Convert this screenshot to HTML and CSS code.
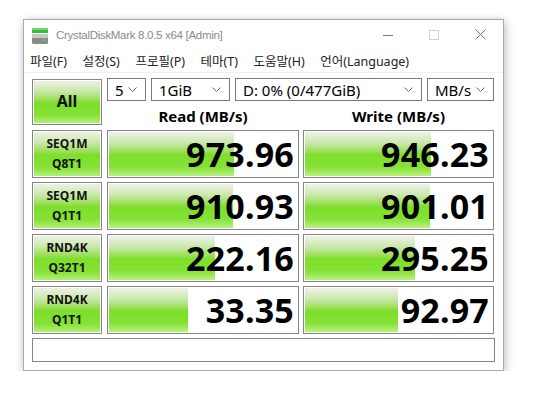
FILE: index.html
```html
<!DOCTYPE html>
<html lang="ko">
<head>
    <meta charset="UTF-8">
    <meta name="viewport" content="width=device-width, initial-scale=1.0">
    <title>CrystalDiskMark 8.0.5 x64 [Admin]</title>
    <link rel="stylesheet" href="styles.css">
</head>
<body>
    <div class="window">
        <div class="titlebar">
            <svg class="app-icon" width="18" height="18" viewBox="0 0 18 18">
                <rect x="1" y="1" width="16" height="5" fill="#3cb83c"/>
                <rect x="1" y="1" width="16" height="2" fill="#6ad86a"/>
                <rect x="1" y="7" width="16" height="10" rx="1.5" fill="#8a8a8a"/>
                <rect x="1" y="7" width="16" height="4" rx="1.5" fill="#c8c8c8"/>
                <rect x="12" y="12" width="3" height="2" fill="#4ed24e"/>
            </svg>
            <span class="title">CrystalDiskMark 8.0.5 x64 [Admin]</span>
            <div class="controls">
                <div class="ctl">
                    <svg width="10" height="10" viewBox="0 0 10 10"><path d="M0 5.5h10" stroke="#777" stroke-width="1"/></svg>
                </div>
                <div class="ctl">
                    <svg width="10" height="10" viewBox="0 0 10 10"><rect x="0.5" y="0.5" width="9" height="9" fill="none" stroke="#d0d0d0"/></svg>
                </div>
                <div class="ctl">
                    <svg width="11" height="11" viewBox="0 0 11 11"><path d="M0.5 0.5l10 10M10.5 0.5l-10 10" stroke="#777" stroke-width="1"/></svg>
                </div>
            </div>
        </div>
        <div class="menubar">
            <span class="menu-item">파일(F)</span>
            <span class="menu-item">설정(S)</span>
            <span class="menu-item">프로필(P)</span>
            <span class="menu-item">테마(T)</span>
            <span class="menu-item">도움말(H)</span>
            <span class="menu-item">언어(Language)</span>
        </div>
        <div class="client">
            <div class="top">
                <div class="btn all">All</div>
                <div class="top-right">
                    <div class="combos">
                        <div class="combo c-count"><span>5</span><svg class="chev" width="9" height="5" viewBox="0 0 9 5"><path d="M0.5 0.5l4 4 4-4" fill="none" stroke="#666"/></svg></div>
                        <div class="combo c-size"><span>1GiB</span><svg class="chev" width="9" height="5" viewBox="0 0 9 5"><path d="M0.5 0.5l4 4 4-4" fill="none" stroke="#666"/></svg></div>
                        <div class="combo c-drive"><span>D: 0% (0/477GiB)</span><svg class="chev" width="9" height="5" viewBox="0 0 9 5"><path d="M0.5 0.5l4 4 4-4" fill="none" stroke="#666"/></svg></div>
                        <div class="combo c-unit"><span>MB/s</span><svg class="chev" width="9" height="5" viewBox="0 0 9 5"><path d="M0.5 0.5l4 4 4-4" fill="none" stroke="#666"/></svg></div>
                    </div>
                    <div class="heads">
                        <div class="head read">Read (MB/s)</div>
                        <div class="head write">Write (MB/s)</div>
                    </div>
                </div>
            </div>

            <div class="row">
                <div class="btn label">SEQ1M<br>Q8T1</div>
                <div class="cell read"><div class="bar" style="--w: 125px">973.96</div></div>
                <div class="cell write"><div class="bar" style="--w: 126px">946.23</div></div>
            </div>
            <div class="row">
                <div class="btn label">SEQ1M<br>Q1T1</div>
                <div class="cell read"><div class="bar" style="--w: 124px">910.93</div></div>
                <div class="cell write"><div class="bar" style="--w: 125px">901.01</div></div>
            </div>
            <div class="row">
                <div class="btn label">RND4K<br>Q32T1</div>
                <div class="cell read"><div class="bar" style="--w: 106px">222.16</div></div>
                <div class="cell write"><div class="bar" style="--w: 110px">295.25</div></div>
            </div>
            <div class="row">
                <div class="btn label">RND4K<br>Q1T1</div>
                <div class="cell read"><div class="bar" style="--w: 79px">33.35</div></div>
                <div class="cell write"><div class="bar" style="--w: 93px">92.97</div></div>
            </div>

            <div class="status"></div>
        </div>
    </div>
</body>
</html>
```

FILE: styles.css
```css
body {
    margin: 0;
    background: #fff;
    font-family: "Noto Sans", "Noto Sans CJK KR", sans-serif;
    color: #000;
}
.window {
    margin: 19px 0 0 23px;
    width: 479px;
    height: 350px;
    border: 1px solid #aaa;
    background: #fff;
    box-shadow: 1px 2px 9px rgba(0, 0, 0, 0.28);
    display: flex;
    flex-direction: column;
}
.titlebar {
    height: 29px;
    display: flex;
    align-items: center;
}
.app-icon {
    margin-left: 7px;
    margin-top: 2px;
}
.title {
    margin-left: 7px;
    font-family: "Liberation Sans", "Noto Sans", sans-serif;
    font-size: 11.5px;
    letter-spacing: -0.3px;
    color: #8a8a8a;
}
.controls {
    margin-left: auto;
    display: flex;
    height: 100%;
}
.ctl {
    width: 46px;
    display: flex;
    align-items: center;
    justify-content: center;
}
.menubar {
    height: 23px;
    display: flex;
    align-items: center;
    gap: 15.5px;
    padding-left: 6px;
    border-bottom: 1px solid #f0f0f0;
    font-size: 12.5px;
    color: #222;
}
.client {
    padding: 5px 8px 0 8px;
    display: flex;
    flex-direction: column;
    gap: 4px;
}
.top {
    display: flex;
    height: 48px;
}
.btn {
    border: 1px solid #858585;
    box-shadow: inset 0 0 0 1px #fff;
    background: linear-gradient(#f0f2ea 0%, #cae8ac 25%, #93de4c 47%, #7ddf2a 52%, #86e236 80%, #b8f27e 100%);
    display: flex;
    align-items: center;
    justify-content: center;
    text-align: center;
    font-weight: bold;
    color: #111;
    box-sizing: border-box;
    width: 70px;
    margin-right: 5px;
    flex-shrink: 0;
}
.all {
    height: 46px;
    margin-top: 1px;
    font-size: 16px;
    padding-bottom: 2px;
}
.label {
    font-size: 12px;
    line-height: 20px;
}
.top-right {
    flex: 1;
    display: flex;
    flex-direction: column;
}
.combos {
    display: flex;
    gap: 5px;
    height: 24px;
}
.combo {
    box-sizing: border-box;
    border: 1px solid #7a7a7a;
    display: flex;
    align-items: center;
    padding-left: 7px;
    padding-right: 8px;
    font-size: 15px;
    background: #fff;
}
.combo span {
    flex: 1;
    white-space: nowrap;
}
.c-count { width: 39px; }
.c-size { width: 79px; }
.c-drive { width: 187px; }
.c-unit { width: 67px; }
.heads {
    display: flex;
    gap: 4px;
    margin-top: 5px;
}
.head {
    font-size: 15px;
    font-weight: bold;
    line-height: 20px;
    text-align: center;
}
.head.read { width: 192px; }
.head.write { width: 191px; }
.row {
    display: flex;
    height: 48px;
}
.cell {
    box-sizing: border-box;
    border: 1px solid #858585;
    padding: 1px;
    background: #fff;
}
.cell.read {
    width: 192px;
    margin-right: 4px;
}
.cell.write {
    width: 191px;
}
.bar {
    height: 100%;
    display: flex;
    align-items: center;
    justify-content: flex-end;
    padding-right: 3px;
    font-size: 34px;
    font-weight: bold;
    letter-spacing: 0.2px;
    background: linear-gradient(#f0f2ea 0%, #cae8ac 25%, #93de4c 47%, #7ddf2a 52%, #86e236 80%, #b8f27e 100%) no-repeat;
    background-size: var(--w) 100%;
}
.status {
    height: 24px;
    box-sizing: border-box;
    border: 1px solid #858585;
}
```
